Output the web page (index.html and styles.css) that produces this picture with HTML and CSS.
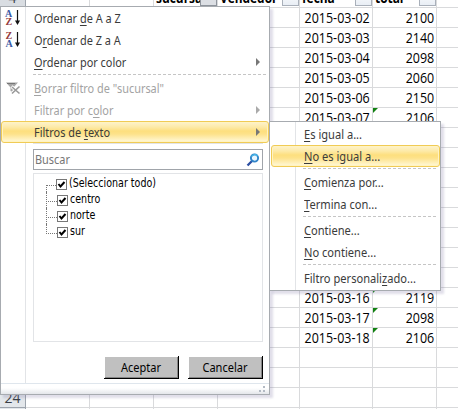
FILE: index.html
```
<!DOCTYPE html>
<html lang="es">
<head>
<meta charset="utf-8">
<title>Filtro</title>
<link rel="stylesheet" href="styles.css">
</head>
<body>
<div class="sheet" id="sheet">
  <div class="row head"><div class="num">4</div><i></i><i></i><b><span>sucursal</span><s class="on"></s></b><b><span>Vendedor</span><s></s></b><b><span>fecha</span><s></s></b><b><span>total</span><s></s></b><i></i></div>
  <div class="row"><div class="num"></div><i></i><i></i><i></i><i></i><p><span>2015-03-02</span></p><p><span>2100</span></p><i></i></div>
  <div class="row"><div class="num"></div><i></i><i></i><i></i><i></i><p><span>2015-03-03</span></p><p><span>2140</span></p><i></i></div>
  <div class="row"><div class="num"></div><i></i><i></i><i></i><i></i><p><span>2015-03-04</span></p><p><span>2098</span></p><i></i></div>
  <div class="row"><div class="num"></div><i></i><i></i><i></i><i></i><p><span>2015-03-05</span></p><p><span>2060</span></p><i></i></div>
  <div class="row"><div class="num"></div><i></i><i></i><i></i><i></i><p><span>2015-03-06</span></p><p><span>2150</span></p><i></i></div>
  <div class="row"><div class="num"></div><i></i><i></i><i></i><i></i><p><span>2015-03-07</span></p><p class="flag"><span>2106</span></p><i></i></div>
  <div class="row"><div class="num"></div><i></i><i></i><i></i><i></i><i></i><i></i><i></i></div>
  <div class="row"><div class="num"></div><i></i><i></i><i></i><i></i><i></i><i></i><i></i></div>
  <div class="row"><div class="num"></div><i></i><i></i><i></i><i></i><i></i><i></i><i></i></div>
  <div class="row"><div class="num"></div><i></i><i></i><i></i><i></i><i></i><i></i><i></i></div>
  <div class="row"><div class="num"></div><i></i><i></i><i></i><i></i><i></i><i></i><i></i></div>
  <div class="row"><div class="num"></div><i></i><i></i><i></i><i></i><i></i><i></i><i></i></div>
  <div class="row"><div class="num"></div><i></i><i></i><i></i><i></i><i></i><i></i><i></i></div>
  <div class="row"><div class="num"></div><i></i><i></i><i></i><i></i><i></i><i></i><i></i></div>
  <div class="row"><div class="num"></div><i></i><i></i><i></i><i></i><p><span>2015-03-16</span></p><p class="flag"><span>2119</span></p><i></i></div>
  <div class="row"><div class="num"></div><i></i><i></i><i></i><i></i><p><span>2015-03-17</span></p><p class="flag"><span>2098</span></p><i></i></div>
  <div class="row"><div class="num"></div><i></i><i></i><i></i><i></i><p><span>2015-03-18</span></p><p class="flag"><span>2106</span></p><i></i></div>
  <div class="row"><div class="num"></div><i></i><i></i><i></i><i></i><i></i><i></i><i></i></div>
  <div class="row"><div class="num"></div><i></i><i></i><i></i><i></i><i></i><i></i><i></i></div>
  <div class="row"><div class="num">24</div><i></i><i></i><i></i><i></i><i></i><i></i><i></i></div>
  <div class="row"><div class="num"></div><i></i><i></i><i></i><i></i><i></i><i></i><i></i></div>
</div>

<div class="menu">
  <div class="item"><svg class="ico" width="20" height="22" viewBox="0 0 20 22"><text class="az blue" x="4" y="9.500">A</text><text class="az red" x="4.500" y="18">Z</text><path d="M16.500 3v12" stroke="#111" stroke-width="1.200"/><path d="M14 13.500h5l-2.500 4.500z" fill="#111"/></svg><span>Ordenar <u>d</u>e A a Z</span></div>
  <div class="item"><svg class="ico" width="20" height="22" viewBox="0 0 20 22"><text class="az red" x="4.500" y="9.500">Z</text><text class="az blue" x="4.500" y="18">A</text><path d="M16.500 3v12" stroke="#111" stroke-width="1.200"/><path d="M14 13.500h5l-2.500 4.500z" fill="#111"/></svg><span>O<u>r</u>denar de Z a A</span></div>
  <div class="item"><span><u>O</u>rdenar por color</span><em class="arrow"></em></div>
  <div class="sep"></div>
  <div class="item off"><svg class="ico" width="20" height="22" viewBox="0 0 20 22"><path d="M5 5.500h12l-4.500 5v5.500l-3-2v-3.500z" fill="#a6a6a6"/><path d="M6 6.500h8" stroke="#777"/><path d="M10.500 9.500l8 7M18 9.500l-7.500 7" stroke="#fff" stroke-width="3"/><path d="M11 10l7.500 6.500M18.500 9.500l-7.500 7" stroke="#999" stroke-width="1.600"/></svg><span><u>B</u>orrar filtro de "sucursal"</span></div>
  <div class="item off"><span>Filtrar por c<u>o</u>lor</span><em class="arrow"></em></div>
  <div class="item hot"><span>Filtros de <u>t</u>exto</span><em class="arrow"></em></div>
  <div class="panel">
    <div class="search"><span>Buscar</span><svg width="14" height="14" viewBox="0 0 14 14"><path d="M6 8L1.500 12.500" stroke="#2b4ea2" stroke-width="2.300"/><circle cx="8.500" cy="5" r="3.600" fill="#e8f6ff" stroke="#2f83c8" stroke-width="1.900"/><path d="M5.500 3.500A3.600 3.600 0 0 1 11.500 3" fill="none" stroke="#45b4e6" stroke-width="1.500"/></svg></div>
    <div class="list">
      <label><svg class="chk" viewBox="0 0 11 11"><rect x=".5" y=".5" width="10" height="10"/><path d="M2.500 5l2 2.500L8.500 3"/></svg><span>(Seleccionar todo)</span></label>
      <label><svg class="chk" viewBox="0 0 11 11"><rect x=".5" y=".5" width="10" height="10"/><path d="M2.500 5l2 2.500L8.500 3"/></svg><span>centro</span></label>
      <label><svg class="chk" viewBox="0 0 11 11"><rect x=".5" y=".5" width="10" height="10"/><path d="M2.500 5l2 2.500L8.500 3"/></svg><span>norte</span></label>
      <label><svg class="chk" viewBox="0 0 11 11"><rect x=".5" y=".5" width="10" height="10"/><path d="M2.500 5l2 2.500L8.500 3"/></svg><span>sur</span></label>
    </div>
    <div class="buttons"><button><span>Aceptar</span></button><button><span>Cancelar</span></button></div>
  </div>
  <div class="foot"><svg width="7" height="7" viewBox="0 0 7 7"><path d="M4 0h2v2H4zM0 4h2v2H0zM4 4h2v2H4z" fill="#b3bac4"/></svg></div>
</div>

<div class="menu sub">
  <div class="item"><span><u>E</u>s igual a...</span></div>
  <div class="item hot"><span><u>N</u>o es igual a...</span></div>
  <div class="sep"></div>
  <div class="item"><span><u>C</u>omienza por...</span></div>
  <div class="item"><span><u>T</u>ermina con...</span></div>
  <div class="sep"></div>
  <div class="item"><span><u>C</u>ontiene...</span></div>
  <div class="item"><span><u>N</u>o contiene...</span></div>
  <div class="sep"></div>
  <div class="item"><span>Filtro personali<u>z</u>ado...</span></div>
</div>
</body>
</html>
```
FILE: styles.css
```
* { box-sizing: border-box; }
body {
  margin: 0;
  width: 458px;
  height: 409px;
  overflow: hidden;
  position: relative;
  background: #fff;
  font-family: "Noto Sans", sans-serif;
}
.sheet { margin-top: -12px; font: 14.5px/19px "Open Sans", sans-serif; color: #000; }
.row { display: grid; grid-template-columns: 26px 64px 64px 64px 82px 73px 64px 21px; height: 20px; }
.row > * {
  margin: 0;
  border-right: 1px solid #d9dadc;
  border-bottom: 1px solid #d9dadc;
  position: relative;
  white-space: nowrap;
}
.row > :last-child { border-right: 0; }
.row .num { background: #e3e7eb; border-color: #9da4ad; text-align: center; color: #3a3f46; font-size: 14px; }
.row.head .num { background: #d9dde2; }
.row b { padding-left: 2px; }
.row b span { display: block; transform-origin: left; transform: scaleX(.82); }
.row s {
  position: absolute;
  right: 0;
  bottom: 1px;
  width: 17px;
  height: 17px;
  background: linear-gradient(#fff, #e9eef5);
  border: 1px solid #a9b0ba;
}
.row s.on { background: #dcdfe4; border-color: #8e949c; }
.row p { display: flex; justify-content: flex-end; padding-right: 2px; }
.row p span { display: block; transform-origin: right; transform: scaleX(.86); }
.flag::before {
  content: "";
  position: absolute;
  left: 0;
  top: 0;
  border-top: 5px solid #118011;
  border-right: 5px solid transparent;
}
.menu {
  position: absolute;
  left: 0;
  top: 6px;
  width: 270px;
  height: 389px;
  border: 1px solid #a7abb0;
  background: linear-gradient(90deg, transparent 24px, #e2e4e7 24px, #e2e4e7 25px, transparent 25px) #fff;
  box-shadow: 3px 3px 2px rgba(120, 110, 160, .22);
  font-size: 12px;
  color: #3b3b3b;
}
.item { position: relative; display: flex; align-items: center; height: 22px; padding-left: 33px; white-space: nowrap; }
.item > span { display: block; transform-origin: left; transform: scaleX(.91); }
.item u { text-underline-offset: 2px; text-decoration-thickness: 1px; }
.off { color: #a3a3a3; }
.ico { position: absolute; left: 0; top: 0; }
.az { font: bold 10px "Liberation Serif", serif; }
.blue { fill: #3b5aa5; }
.red { fill: #963c3c; }
.arrow { margin-left: auto; margin-right: 9px; border-left: 4px solid #777; border-top: 4px solid transparent; border-bottom: 4px solid transparent; }
.off .arrow { border-left-color: #aaa; }
.sep {
  height: 4px;
  margin: 0 2px 0 32px;
  background: repeating-linear-gradient(90deg, #c5c5c5 0 3px, transparent 3px 5px) 0 1px / 100% 1px no-repeat;
}
.hot::before {
  content: "";
  position: absolute;
  inset: 0;
  border: 1px solid #f0cb55;
  border-radius: 3px;
  background: linear-gradient(#fdf3cd 0, #fdeaa8 25%, #fddf7e 45%, #fde28a 60%, #fff6d0 95%);
  box-shadow: inset 0 0 0 1px #fff3c2;
}
.hot > * { position: relative; }
.panel { margin-left: 32px; width: 230px; height: 240px; border-top: 1px solid #e2e4e7; display: flex; flex-direction: column; }
.search {
  margin-top: 5px;
  height: 21px;
  border: 1px solid #a0a4aa;
  display: flex;
  align-items: center;
  justify-content: space-between;
  padding: 0 2px 0 1px;
  color: #767676;
  background: #fff;
}
.search span { transform-origin: left; transform: scaleX(.91); }
.list { margin-top: 3px; height: 169px; border: 1px solid #e2e4e7; padding: 2px 0 0 12px; font: 11.5px/16px "DejaVu Sans Condensed", "DejaVu Sans", sans-serif; color: #000; }
.list label { display: flex; height: 16px; position: relative; }
.list label::before { content: ""; width: 10px; height: 9px; border-left: 1px dotted #777; border-bottom: 1px dotted #777; }
.list label:nth-child(n+2)::after { content: ""; position: absolute; left: 0; top: -7px; height: 7px; border-left: 1px dotted #777; }
.list label:first-child::before { border-left: 0; }
.list span { margin: -1px 0 1px 2px; transform-origin: left; transform: scaleX(.92); }
.chk { width: 11px; height: 11px; margin-top: 3px; fill: #fff; stroke: #777; }
.chk path { stroke: #000; stroke-width: 2; fill: none; }
.buttons { display: flex; justify-content: flex-end; gap: 9px; margin-top: 14px; }
button {
  width: 75px;
  height: 23px;
  padding: 0;
  border: solid #000;
  border-width: 0 1px 1px 0;
  border-radius: 0;
  background: #c0c0c0;
  box-shadow: inset 1px 1px #fff, inset -1px -1px #858585;
  font: 12px "Noto Sans", sans-serif;
  color: #000;
}
button span { display: block; transform: scaleX(.92); }
.foot { height: 11px; border-top: 1px solid #dfe6ed; background: linear-gradient(#fff 40%, #e4e6ea); display: flex; justify-content: flex-end; align-items: flex-end; padding: 0 3px 1px 0; }
.sub { left: 269px; top: 121px; width: 172px; height: 170px; padding-top: 1px; background: linear-gradient(90deg, transparent 25px, #e2e4e7 25px, #e2e4e7 26px, transparent 26px) #fff; }
.sub .item { padding-left: 34px; }
.sub .item > span { transform: scaleX(.925); }
.sub .sep { margin-left: 33px; }
.sub .hot::before { left: 1px; right: 0; }
```
